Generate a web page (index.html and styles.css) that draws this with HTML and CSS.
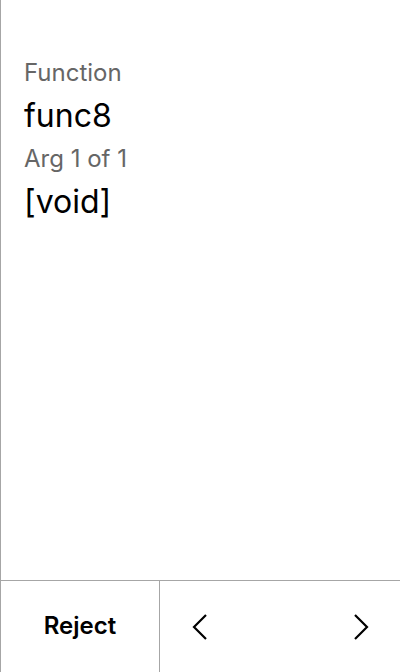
FILE: index.html
```html
<!DOCTYPE html>
<html>
<head>
<meta charset="utf-8">
<link rel="stylesheet" href="styles.css">
</head>
<body>
<div class="screen">
  <main class="content">
    <div class="label">Function</div>
    <div class="value">func8</div>
    <div class="label">Arg 1 of 1</div>
    <div class="value">[void]</div>
  </main>
  <footer class="bar">
    <button class="reject">Reject</button>
    <div class="nav">
      <button class="arrow" aria-label="Previous">
        <svg width="16" height="26" viewBox="0 0 16 26"><path d="M14 1 L2 13 L14 25" fill="none" stroke="#000" stroke-width="2.2"/></svg>
      </button>
      <button class="arrow" aria-label="Next">
        <svg width="16" height="26" viewBox="0 0 16 26"><path d="M2 1 L14 13 L2 25" fill="none" stroke="#000" stroke-width="2.2"/></svg>
      </button>
    </div>
  </footer>
</div>
</body>
</html>
```
FILE: styles.css
```css
* { box-sizing: border-box; }
html, body { margin: 0; padding: 0; background: #fff; }
body { font-family: Inter, "Noto Sans", sans-serif; }
.screen {
  width: 400px;
  height: 672px;
  border-left: 1px solid #a6a6a6;
  display: flex;
  flex-direction: column;
}
.content {
  flex: 1;
  padding: 53px 0 0 23px;
}
.label {
  font-size: 24px;
  color: #666;
  line-height: 40px;
}
.label + .value + .label {
  margin-top: 3px;
}
.value {
  font-size: 32px;
  color: #000;
  line-height: 40px;
  margin-top: 3px;
}
.bar {
  height: 92px;
  border-top: 1px solid #a6a6a6;
  display: flex;
}
button {
  background: none;
  border: none;
  padding: 0;
  font-family: inherit;
  cursor: pointer;
}
.reject {
  width: 159px;
  font-size: 24px;
  font-weight: 600;
  color: #000;
  border-right: 1px solid #a6a6a6;
  padding-bottom: 2px;
}
.nav {
  flex: 1;
  display: flex;
  justify-content: space-between;
  align-items: center;
  padding: 0 31px 0 32px;
}
.arrow {
  width: 16px;
  height: 26px;
  display: flex;
}
```
